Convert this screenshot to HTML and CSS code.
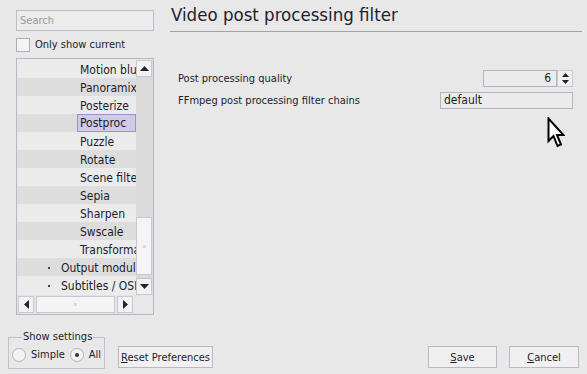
FILE: index.html
```html
<!DOCTYPE html>
<html>
<head>
<meta charset="utf-8">
<link rel="stylesheet" href="styles.css">
</head>
<body>
<div class="window">
  <div class="content">
    <aside class="sidebar">
      <div class="search">Search</div>
      <label class="check"><span class="box"></span>Only show current</label>
      <div class="tree">
        <div class="tree-body">
          <ul class="rows">
            <li class="row l2">Motion blur</li>
            <li class="row l2 alt">Panoramix</li>
            <li class="row l2">Posterize</li>
            <li class="row l2 alt"><span class="sel">Postproc</span></li>
            <li class="row l2">Puzzle</li>
            <li class="row l2 alt">Rotate</li>
            <li class="row l2">Scene filter</li>
            <li class="row l2 alt">Sepia</li>
            <li class="row l2">Sharpen</li>
            <li class="row l2 alt">Swscale</li>
            <li class="row l2">Transformation</li>
            <li class="row l1 alt"><span class="dot"></span>Output modules</li>
            <li class="row l1"><span class="dot"></span>Subtitles / OSD</li>
          </ul>
          <div class="vscroll">
            <div class="sbtn"><svg width="9" height="5" viewBox="0 0 9 5"><path d="M0 5 L4.5 0 L9 5Z" fill="#222"/></svg></div>
            <div class="vtrack"><div class="vthumb"><span class="grip"></span></div></div>
            <div class="sbtn"><svg width="9" height="5" viewBox="0 0 9 5"><path d="M0 0 L4.5 5 L9 0Z" fill="#222"/></svg></div>
          </div>
        </div>
        <div class="hscroll">
          <div class="hbtn"><svg width="5" height="9" viewBox="0 0 5 9"><path d="M5 0 L0 4.5 L5 9Z" fill="#222"/></svg></div>
          <div class="hthumb"><span class="grip"></span></div>
          <div class="htrack"></div>
          <div class="hbtn"><svg width="5" height="9" viewBox="0 0 5 9"><path d="M0 0 L5 4.5 L0 9Z" fill="#222"/></svg></div>
          <div class="corner"></div>
        </div>
      </div>
    </aside>
    <main class="panel">
      <h1 class="title">Video post processing filter</h1>
      <div class="form">
        <div class="field">
          <span class="label">Post processing quality</span>
          <div class="spin">
            <span class="spin-val">6</span>
            <div class="spin-btns">
              <span class="sb"><svg width="7" height="4" viewBox="0 0 7 4"><path d="M0 4 L3.5 0 L7 4Z" fill="#222"/></svg></span>
              <span class="sb"><svg width="7" height="4" viewBox="0 0 7 4"><path d="M0 0 L3.5 4 L7 0Z" fill="#222"/></svg></span>
            </div>
          </div>
        </div>
        <div class="field">
          <span class="label">FFmpeg post processing filter chains</span>
          <div class="text-input">default</div>
        </div>
      </div>
      <svg class="cursor" width="18" height="32" viewBox="0 0 18 32">
        <path d="M1.5 1.5 L1.5 24 L6.5 19 L10.5 29 L14 27.5 L10 18 L16.5 18 Z" fill="#fff" stroke="#000" stroke-width="2" stroke-linejoin="miter"/>
      </svg>
    </main>
  </div>
  <footer class="footer">
    <fieldset class="group">
      <legend>Show settings</legend>
      <label class="radio"><span class="rb"></span>Simple</label>
      <label class="radio"><span class="rb on"></span>All</label>
    </fieldset>
    <button class="btn reset"><u>R</u>eset Preferences</button>
    <span class="spacer"></span>
    <button class="btn save"><u>S</u>ave</button>
    <button class="btn cancel"><u>C</u>ancel</button>
  </footer>
</div>
</body>
</html>
```

FILE: styles.css
```css
* { box-sizing: border-box; }
html, body { margin: 0; padding: 0; }
body {
  background: #e8e8e8;
  font-family: "DejaVu Sans Condensed", "DejaVu Sans", sans-serif;
  font-size: 11px;
  color: #1c1c2c;
}
.window {
  width: 587px;
  height: 374px;
  display: flex;
  flex-direction: column;
}
.content {
  display: flex;
  height: 330px;
}
.sidebar {
  width: 154px;
  padding: 10px 0 0 16px;
  display: flex;
  flex-direction: column;
}
.search {
  height: 21px;
  border: 1px solid #bcbcc8;
  background: #ececec;
  color: #9a9a9a;
  padding: 3px 0 0 3px;
  line-height: 14px;
}
.check {
  display: flex;
  align-items: center;
  height: 14px;
  margin-top: 7px;
  line-height: 14px;
}
.box {
  width: 14px;
  height: 14px;
  border: 1px solid #aeaeb8;
  background: #f3f3f3;
  margin-right: 5px;
}
.tree {
  margin-top: 6px;
  border: 1px solid #b8b8c4;
  height: 257px;
  background: #ebebeb;
  display: flex;
  flex-direction: column;
}
.tree-body {
  display: flex;
  height: 236px;
  padding-top: 1px;
}
.rows {
  list-style: none;
  margin: 0;
  padding: 0;
  flex: 1;
  overflow: hidden;
}
.row {
  height: 18px;
  line-height: 18px;
  padding-top: 1px;
  white-space: nowrap;
  font-size: 12px;
  display: flex;
  align-items: center;
}
.row.alt { background: #dddddd; }
.l2 { padding-left: 63px; }
.l1 { padding-left: 31px; }
.dot {
  flex-shrink: 0;
  width: 2px;
  height: 2px;
  background: #444;
  margin-right: 11px;
}
.sel {
  background: #cfcaea;
  border: 1px solid #9a93cf;
  height: 18px;
  line-height: 16px;
  padding-left: 2px;
  margin-left: -3px;
  margin-top: -1px;
  flex: 1;
  align-self: stretch;
}
.vscroll {
  width: 17px;
  display: flex;
  flex-direction: column;
  background: #dadada;
  padding: 0 1px 0 0;
}
.sbtn {
  height: 17px;
  border: 1px solid #c8c8d4;
  background: #f2f2f2;
  display: flex;
  align-items: center;
  justify-content: center;
}
.vtrack {
  flex: 1;
  display: flex;
  flex-direction: column;
  justify-content: flex-end;
  padding-bottom: 3px;
}
.vthumb {
  height: 58px;
  border: 1px solid #c8c8d4;
  background: #f4f4f4;
  display: flex;
  align-items: center;
  justify-content: center;
}
.grip {
  width: 3px;
  height: 3px;
  background: #d8d8e0;
}
.hscroll {
  display: flex;
  height: 19px;
  padding: 1px 0 1px 1px;
  background: #e4e4e4;
}
.hbtn {
  width: 16px;
  border: 1px solid #c8c8d4;
  background: #f2f2f2;
  display: flex;
  align-items: center;
  justify-content: center;
}
.hthumb {
  width: 79px;
  margin-left: 2px;
  border: 1px solid #c8c8d4;
  background: #f4f4f4;
  display: flex;
  align-items: center;
  justify-content: center;
}
.htrack { width: 2px; }
.corner { flex: 1; background: #e8e8e8; }
.panel {
  position: relative;
  flex: 1;
  padding: 3px 5px 0 16px;
}
.title {
  margin: 0;
  font-family: "DejaVu Sans Condensed", "DejaVu Sans", sans-serif;
  font-weight: normal;
  font-size: 18.5px;
  line-height: 24px;
  color: #1e1e30;
  padding-left: 1px;
  padding-bottom: 4px;
  border-bottom: 1px solid #a4a4a4;
}
.form {
  margin-top: 38px;
  padding-left: 8px;
  padding-right: 9px;
  display: flex;
  flex-direction: column;
  gap: 5px;
}
.field {
  display: flex;
  justify-content: space-between;
  align-items: center;
  height: 17px;
}
.spin {
  display: flex;
  height: 17px;
}
.spin-val {
  width: 74px;
  border: 1px solid #b4b4c0;
  background: #ebebeb;
  text-align: right;
  padding-right: 5px;
  line-height: 15px;
  font-size: 12px;
}
.spin-btns {
  width: 16px;
  display: flex;
  flex-direction: column;
  border: 1px solid #c8c8d4;
  background: #f0f0f0;
}
.sb {
  flex: 1;
  display: flex;
  align-items: center;
  justify-content: center;
}
.text-input {
  width: 133px;
  height: 17px;
  border: 1px solid #b4b4c0;
  background: #ebebeb;
  padding-left: 3px;
  line-height: 15px;
  font-size: 12px;
}
.cursor {
  position: absolute;
  left: 393px;
  top: 117px;
}
.footer {
  flex: 1;
  display: flex;
  align-items: flex-start;
  padding: 0 8px 0 8px;
}
.group {
  margin: 0;
  margin-top: 1px;
  width: 97px;
  height: 38px;
  border: 1px solid #c0c0cc;
  padding: 0 0 0 3px;
  display: flex;
  align-items: center;
  gap: 5px;
}
.group legend {
  padding: 0 1px;
  margin-left: 10px;
  line-height: 12px;
}
.radio {
  display: flex;
  align-items: center;
  margin-top: -2px;
}
.rb {
  width: 14px;
  height: 14px;
  border: 1px solid #b4b4c0;
  border-radius: 50%;
  background: #f2f2f2;
  margin-right: 5px;
  display: flex;
  align-items: center;
  justify-content: center;
}
.rb.on::after {
  content: "";
  width: 4px;
  height: 4px;
  border-radius: 50%;
  background: #333;
}
.btn {
  margin-top: 16px;
  height: 22px;
  border: 1px solid #b8b8c8;
  background: #f0f0f0;
  font-family: inherit;
  font-size: 11px;
  color: #1c1c2c;
  padding: 0;
}
.btn u { text-decoration: underline; }
.reset { width: 95px; margin-left: 13px; }
.spacer { flex: 1; }
.save { width: 69px; }
.cancel { width: 70px; margin-left: 12px; }
```
